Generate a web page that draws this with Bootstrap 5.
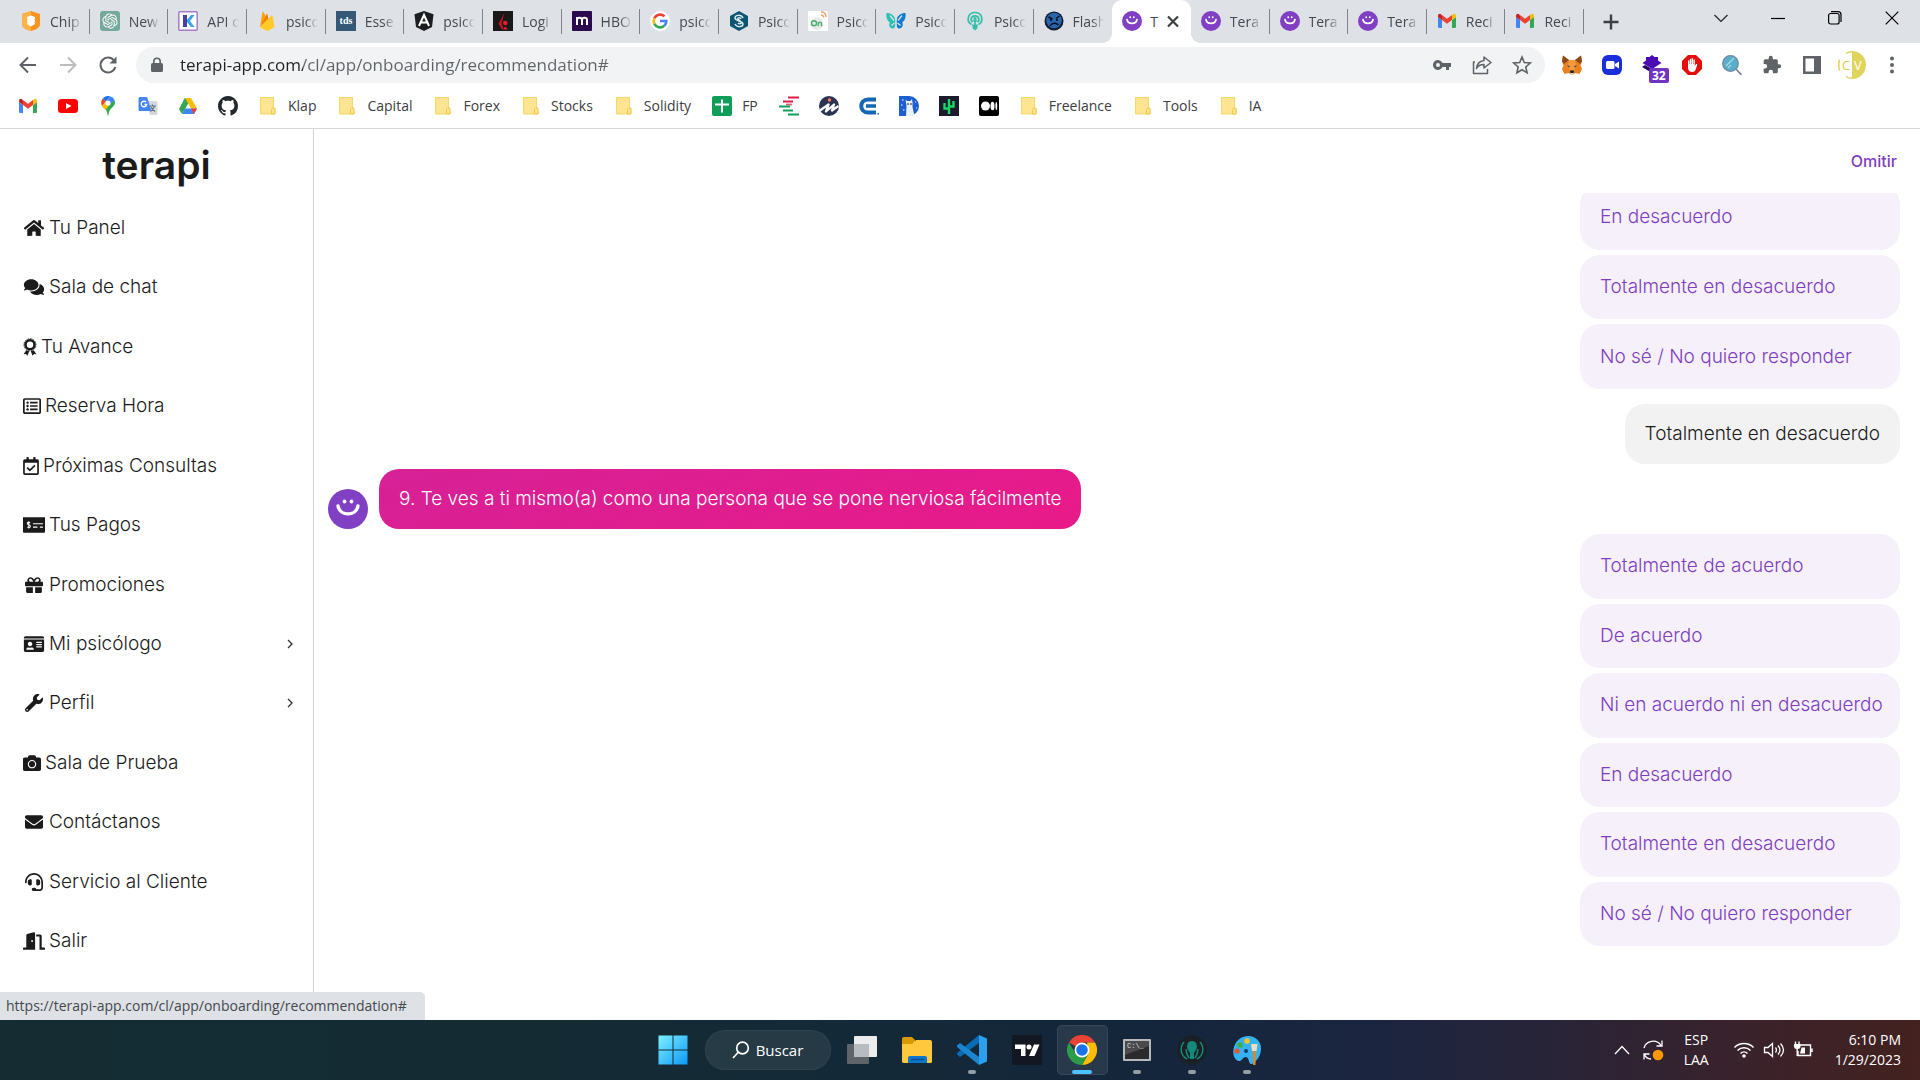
<!DOCTYPE html>
<html lang="es">
<head>
<meta charset="utf-8">
<meta name="viewport" content="width=device-width, initial-scale=1">
<title>Terapi</title>
<link href="https://cdn.jsdelivr.net/npm/bootstrap@5.3.0/dist/css/bootstrap.min.css" rel="stylesheet">
<style>
:root{--ui:"Open Sans","Noto Sans",sans-serif;--brand:Inter,"Open Sans",sans-serif;--violet:#7e3fbf;--strip:#dee1e6}
body{font-family:var(--ui);color:#1b1b1b;overflow:hidden}
svg{display:block;flex:none}
.bare{background:none;border:0;padding:0;color:inherit;display:flex;align-items:center;justify-content:center;text-decoration:none}
.ic20{width:20px;height:20px}
.ic30{width:30px;height:30px}
/* tab strip */
.strip{background:var(--strip);height:43px;padding-left:11px}
.tabs{min-width:0}
.tab-item{flex:1 1 0;min-width:0;height:43px;gap:9px;padding:0 8px 1px 10px;position:relative;font-size:14px;color:#45494d;display:flex;align-items:center;text-decoration:none}
.tab-item::after{content:"";position:absolute;right:0;top:9px;height:25px;width:1px;background:#808488}
.tab-item.on{background:#fff;border-radius:10px 10px 0 0;gap:4px}
.tab-item.on::after,.tab-item.quiet::after{display:none}
.tab-label{flex:1 1 0;min-width:0;overflow:hidden;white-space:nowrap;-webkit-mask-image:linear-gradient(90deg,#000 60%,transparent);mask-image:linear-gradient(90deg,#000 60%,transparent)}
.on .tab-label{-webkit-mask-image:none;mask-image:none}
.flare{position:absolute;bottom:0;width:10px;height:10px}
.flare-l{left:-10px;background:radial-gradient(circle at 0 0,transparent 10px,#fff 10px)}
.flare-r{right:-10px;background:radial-gradient(circle at 100% 0,transparent 10px,#fff 10px)}
.strip-end{width:336px}
.win-btn{width:57px;height:36px}
/* toolbar */
.toolbar{height:44px;padding:0 8px}
.tool{width:40px;height:40px;color:#5f6368}
.omni{background:#f1f3f4;border-radius:18px;height:36px;padding:0 3px 0 14px;margin:0 7px 0 8px}
.url{border:0;outline:0;padding:0;font-size:17px;color:transparent;background:linear-gradient(90deg,#202124 123px,#5f6368 123px);-webkit-background-clip:text;background-clip:text}
.ext-badge{position:absolute;left:17px;top:23px;background:#6f35c0;color:#fff;font-size:12px;line-height:15px;font-weight:700;border-radius:2px;padding:0 3px}
/* bookmarks */
.marks{height:42px;padding:0 8px 4px;border-bottom:1px solid #d5d7da;font-size:14px}
.mark-link{display:flex;align-items:center;gap:10px;padding:0 10px;color:#3c4043;text-decoration:none}
.mark-text{padding-right:11px}
/* page */
.side{width:314px;border-right:1px solid #d0d0d3;padding-bottom:49px}
.logo{font:600 39px/66px var(--brand);color:#1b1b1b;padding-top:3px}
.side-link{flex:1 1 0;display:flex;align-items:center;gap:4px;padding:0 19px 0 23px;font:300 19px/24px var(--brand);color:#1b1b1b;text-decoration:none}
.side-link svg{fill:currentColor;height:18px}
.w22{width:22px}.w18{width:18px}.w16{width:16px}.w14{width:14px}
.skip{font:500 16px/24px var(--brand);color:var(--violet)}
.page-head{height:65px;padding:0 23px 0 0}
.thread{overflow:hidden;padding:0 20px 74px 14px}
.options{width:320px;gap:5px}
.three{height:204px}.six{height:412px}
.opt{flex:1 1 0;border:0;border-radius:20px;background:#f5f0fa;color:var(--violet);font:300 19px/24px var(--brand);text-align:left;white-space:nowrap;padding:0 20px}
.reply{border-radius:20px;background:#f2f2f2;font:300 19px/24px var(--brand);padding:18px 20px;margin:15px 0 5px}
.question{gap:11px;margin-bottom:5px}
.ask{border-radius:20px;background:linear-gradient(160deg,#d62196,#e91a89);color:#fff;font:300 19px/24px var(--brand);padding:18px 20px}
.status{position:absolute;left:0;bottom:0;background:var(--strip);border-radius:0 5px 0 0;color:#45494d;font-size:14px;line-height:28px;padding:0 18px 0 6px}
/* taskbar */
.taskbar{height:60px;background:linear-gradient(90deg,#142c32 0,#142b35 35%,#14263b 60%,#1c2540 72%,#2a2436 82%,#3a222b 91%,#43221f 100%);color:#fff}
.app{width:55px;height:60px;position:relative}
.app.run::after{content:"";position:absolute;bottom:6px;width:8px;height:4px;border-radius:2px;background:#949ea6}
.app.live::before{content:"";position:absolute;inset:5px 2px;border-radius:5px;background:#ffffff16;border:1px solid #ffffff12}
.app.live::after{width:20px;background:#4cc2ff}
.app svg{position:relative}
.find{width:126px;height:40px;border-radius:20px;background:#ffffff14;border:1px solid #ffffff0d;gap:6px;font-size:15px}
.tray{font-size:14px;line-height:20px}
.clock{margin-right:19px}
</style>
<script src="https://cdn.jsdelivr.net/npm/bootstrap@5.3.0/dist/js/bootstrap.bundle.min.js"></script>
</head>
<body class="vh-100 d-flex flex-column bg-white">
<svg class="d-none" aria-hidden="true">
<symbol id="gmail" viewBox="0 0 20 20"><path fill="#4285f4" d="M1 6v9.500a1.500 1.500 0 0 0 1.500 1.500H5V9z"/><path fill="#34a853" d="M15 9v8h2.500a1.500 1.500 0 0 0 1.500-1.500V6z"/><path fill="#fbbc04" d="M15 4.500V9l4-3V5c0-2-2-2.800-3.300-1.600z"/><path fill="#c5221f" d="M1 5v1l4 3V4.500l-.7-1.100C3 2.200 1 3 1 5z"/><path fill="#ea4335" d="M5 9V4l5 3.800L15 4v5l-5 3.800z"/></symbol>
<symbol id="smile" viewBox="0 0 40 40"><circle cx="20" cy="20" r="20" fill="#8140c4"/><circle cx="16.500" cy="12.500" r="1.900" fill="#fff"/><circle cx="23.500" cy="12.500" r="1.900" fill="#fff"/><path d="M10 17c2 10.500 18 10.500 20 0" fill="none" stroke="#fff" stroke-width="3.400" stroke-linecap="round"/></symbol>
<symbol id="folder" viewBox="0 0 20 20"><path fill="#ffe591" stroke="#f7d766" d="M2.500 1.500h13v10.500h1.500v6H2.500z"/><path fill="#ffe591" stroke="#f0c94b" d="M13.500 18v-4.500c0-1.500 3-2 3.500 0V18z"/></symbol>
<symbol id="chev" viewBox="0 0 8 10"><path d="M2 1l4 4-4 4" fill="none" stroke="#333" stroke-width="1.300"/></symbol>
</svg>

<header>
<div class="strip d-flex">
<nav class="tabs d-flex flex-fill" aria-label="Pestañas">
<a class="tab-item" href="#"><svg class="ic20" viewBox="0 0 20 20"><path fill="#f7931e" d="M10 0l9 3v10c0 4-5 6-9 7-4-1-9-3-9-7V3z"/><path fill="#ffb347" d="M10 0v20c-4-1-9-3-9-7V3z"/><path fill="#fff" d="M6 6l4-1.500L14 6v2l-1 .5 1 .5v2l-1 .5 1 .5v1l-4 2.500L6 13v-1l1-.5-1-.5V9l1-.5L6 8z"/></svg><span class="tab-label">Chip</span></a>
<a class="tab-item" href="#"><svg class="ic20" viewBox="0 0 20 20"><rect width="20" height="20" rx="3" fill="#75a99b"/><path fill="#fff" transform="translate(2.400 2.400) scale(.635)" d="M22.282 9.821a5.985 5.985 0 0 0-.516-4.911 6.046 6.046 0 0 0-6.510-2.900A6.065 6.065 0 0 0 4.981 4.182a5.985 5.985 0 0 0-3.998 2.900 6.046 6.046 0 0 0 .743 7.097 5.980 5.980 0 0 0 .511 4.911 6.051 6.051 0 0 0 6.515 2.900A5.985 5.985 0 0 0 13.260 24a6.056 6.056 0 0 0 5.772-4.206 5.989 5.989 0 0 0 3.998-2.900 6.056 6.056 0 0 0-.748-7.073zm-9.022 12.608a4.476 4.476 0 0 1-2.876-1.041l.142-.080 4.778-2.758a.795.795 0 0 0 .393-.681v-6.737l2.020 1.169a.071.071 0 0 1 .038.052v5.583a4.504 4.504 0 0 1-4.495 4.494zm-9.661-4.125a4.471 4.471 0 0 1-.535-3.014l.142.085 4.783 2.758a.771.771 0 0 0 .781 0l5.843-3.369v2.332a.080.080 0 0 1-.033.062L9.740 19.950a4.499 4.499 0 0 1-6.141-1.646zM2.341 7.896a4.485 4.485 0 0 1 2.366-1.973V11.600a.766.766 0 0 0 .388.677l5.814 3.354-2.020 1.169a.076.076 0 0 1-.071 0l-4.830-2.787A4.504 4.504 0 0 1 2.341 7.872zm16.596 3.856L13.104 8.364 15.119 7.200a.076.076 0 0 1 .071 0l4.830 2.791a4.494 4.494 0 0 1-.677 8.104v-5.677a.790.790 0 0 0-.407-.667zm2.011-3.023l-.142-.085-4.774-2.782a.776.776 0 0 0-.785 0L9.409 9.230V6.897a.066.066 0 0 1 .028-.062l4.830-2.787a4.499 4.499 0 0 1 6.680 4.660zM8.307 12.863l-2.020-1.164a.080.080 0 0 1-.038-.057V6.074a4.499 4.499 0 0 1 7.376-3.454l-.142.081L8.704 5.459a.795.795 0 0 0-.393.681zm1.098-2.365l2.602-1.500 2.607 1.500v2.999l-2.597 1.500-2.607-1.500z"/></svg><span class="tab-label">New</span></a>
<a class="tab-item" href="#"><svg class="ic20" viewBox="0 0 20 20"><rect x=".8" y=".8" width="18.400" height="18.400" rx="1" fill="#fff" stroke="#a77bc9" stroke-width="1.500"/><path fill="#4b3fa7" d="M5 4h4v12H5z"/><path fill="#35a6e0" d="M9 9l4-5h3.500l-4.500 6 4.500 6H13l-4-5z"/></svg><span class="tab-label">API d</span></a>
<a class="tab-item" href="#"><svg class="ic20" viewBox="0 0 20 20"><path fill="#ffa000" d="M3 16L5.500 1c.1-.6.600-.6.900-.1L9 5.500z"/><path fill="#f57c00" d="M11.500 8L3 16 9.500 3.500c.3-.5.700-.5 1 0z"/><path fill="#ffca28" d="M3 16L14.500 4.500c.4-.4.900-.2 1 .3L17.500 16l-6.500 3.700c-.5.300-1 .3-1.500 0z"/></svg><span class="tab-label">psico</span></a>
<a class="tab-item" href="#"><svg class="ic20" viewBox="0 0 20 20"><rect width="20" height="20" fill="#355876"/><text x="10" y="13" fill="#fff" font-family="Liberation Serif" font-weight="700" font-size="10" text-anchor="middle">tds</text></svg><span class="tab-label">Esse</span></a>
<a class="tab-item" href="#"><svg class="ic20" viewBox="0 0 20 20"><path fill="#1b1d20" d="M10 0l9.500 3.200L18 16l-8 4-8-4L.5 3.200z"/><path fill="none" stroke="#fff" stroke-width="2" d="M5 15l5-11 5 11M7 11.500h6"/></svg><span class="tab-label">psico</span></a>
<a class="tab-item" href="#"><svg class="ic20" viewBox="0 0 20 20"><rect width="20" height="20" fill="#191919"/><path fill="#c8141e" d="M11.500 2L5.500 12.500 9 18.500l1.500-1-2-5z"/><circle cx="12.300" cy="12" r="2.300" fill="#e3202b"/><path fill="#e3202b" d="M10 18.500l2-3 3 3z"/></svg><span class="tab-label">Logi</span></a>
<a class="tab-item" href="#"><svg class="ic20" viewBox="0 0 20 20"><rect width="20" height="20" rx="1" fill="#2b0a4d"/><path fill="none" stroke="#fff" stroke-width="2" d="M5 14V6m0 3c0-3 5-3 5 0v5m0-5c0-3 5-3 5 0v5"/></svg><span class="tab-label">HBO</span></a>
<a class="tab-item" href="#"><svg class="ic20" viewBox="0 0 20 20"><circle cx="10" cy="10" r="10" fill="#fff"/><g fill="none" stroke-width="2.600"><path stroke="#ea4335" d="M4.300 7.200A6.400 6.400 0 0 1 14.500 5.400"/><path stroke="#fbbc05" d="M4.300 7.200a6.400 6.400 0 0 0 0 5.600"/><path stroke="#34a853" d="M4.300 12.800a6.400 6.400 0 0 0 10 2"/><path stroke="#4285f4" d="M14.300 14.800c1.500-1.300 2.100-3 2-4.800H10"/></g></svg><span class="tab-label">psico</span></a>
<a class="tab-item" href="#"><svg class="ic20" viewBox="0 0 20 20"><path fill="#0c5672" d="M10 0l9 5v10l-9 5-9-5V5z"/><path fill="none" stroke="#dce9ee" stroke-width="1.500" d="M14 7c-2-4-8-3-8 0s8 3 8 6-6 4-8 0M12 8c-1-2-4-1-3 0l3 3c1 2-2 2-3 1"/></svg><span class="tab-label">Psico</span></a>
<a class="tab-item" href="#"><svg class="ic20" viewBox="0 0 20 20"><rect width="20" height="20" fill="#fff"/><circle cx="9" cy="12.500" r="6.500" fill="#e9e9ea"/><circle cx="6" cy="12.200" r="2.500" fill="none" stroke="#4fae6c" stroke-width="1.500"/><path fill="none" stroke="#4fae6c" stroke-width="1.500" d="M10.300 15.300v-4m0 1.500c0-2 3.200-2 3.200 0v2.500"/><path fill="none" stroke="#f5a572" stroke-width="1.500" d="M13 1c3 0 5 2 5 5M13 4c1.500 0 2.500 1 2.500 2.500"/></svg><span class="tab-label">Psico</span></a>
<a class="tab-item" href="#"><svg class="ic20" viewBox="0 0 20 20"><path fill="#2cc0b4" d="M9.400 8.500C8.500 4.500 5 2 .5 2 0 6 1 10 3.800 11.200c-1.300 2.500-.3 6 2.700 6.300 2.500 0 3.300-2.500 3-6z"/><path fill="#0f7bcf" d="M10.600 8.500c.9-4 4.400-6.500 8.900-6.500.5 4-.5 8-3.300 9.200 1.300 2.500.3 6-2.700 6.300-2.500 0-3.300-2.500-3-6z"/><path stroke="#dee1e6" stroke-width="1.300" fill="none" d="M10 3v16M8.500 12l-3 2.500M11.500 12l3 2.500M4 4.500l4 5M16 4.500l-4 5"/></svg><span class="tab-label">Psico</span></a>
<a class="tab-item" href="#"><svg class="ic20" viewBox="0 0 20 20"><g fill="none" stroke="#35bfa8" stroke-width="1.700"><path d="M6.500 13.500C1 10.500 2.500 1.500 10 1.500s9 9 3.500 12"/><path d="M7.500 11C5 9 6 4.800 10 4.800s5 4.200 2.500 6.200M8.500 9l1.500 2 1.500-2M10 10v5"/></g><circle cx="10" cy="7.500" r="1.600" fill="#35bfa8"/><path fill="#35bfa8" d="M7 13.500h6l-.8 4L10 19.500l-2.200-2z"/></svg><span class="tab-label">Psico</span></a>
<a class="tab-item quiet" href="#"><svg class="ic20" viewBox="0 0 20 20"><circle cx="10" cy="10" r="9.500" fill="#111c33"/><circle cx="10" cy="9.500" r="7.800" fill="#2a66ad"/><path fill="none" stroke="#0b1020" stroke-width="1.500" d="M4.500 6l4 2M15.500 5l-3.500 2.500M6 15c2-3.500 6-3.500 8.500-1"/><circle cx="7" cy="9" r="1"/><circle cx="13" cy="9" r="1"/></svg><span class="tab-label">Flash</span></a>
<div class="tab-item on"><span class="flare flare-l"></span><span class="flare flare-r"></span><svg class="ic20 me-1"><use href="#smile"/></svg><span class="tab-label">T</span><button class="bare" aria-label="Cerrar pestaña"><svg width="20" height="20" viewBox="0 0 20 20"><path stroke="#3c4043" stroke-width="2.200" d="M5 5.500l10 10M15 5.500l-10 10"/></svg></button></div>
<a class="tab-item" href="#"><svg class="ic20"><use href="#smile"/></svg><span class="tab-label">Tera</span></a>
<a class="tab-item" href="#"><svg class="ic20"><use href="#smile"/></svg><span class="tab-label">Tera</span></a>
<a class="tab-item" href="#"><svg class="ic20"><use href="#smile"/></svg><span class="tab-label">Tera</span></a>
<a class="tab-item" href="#"><svg class="ic20"><use href="#gmail"/></svg><span class="tab-label">Reci</span></a>
<a class="tab-item" href="#"><svg class="ic20"><use href="#gmail"/></svg><span class="tab-label">Reci</span></a>
</nav>
<div class="strip-end d-flex flex-shrink-0">
<button class="bare px-3 me-auto" aria-label="Nueva pestaña"><svg width="22" height="22" viewBox="0 0 22 22"><path stroke="#3c4043" stroke-width="2.400" d="M11 3.500v15M3.500 11h15"/></svg></button>
<button class="bare win-btn" aria-label="Buscar pestañas"><svg width="16" height="16" viewBox="0 0 16 16"><path fill="none" stroke="#222" stroke-width="1.200" d="M1.500 5L8 11.500 14.500 5"/></svg></button>
<button class="bare win-btn" aria-label="Minimizar"><svg width="14" height="14" viewBox="0 0 14 14"><path stroke="#000" stroke-width="1.200" d="M0 7.500h14"/></svg></button>
<button class="bare win-btn" aria-label="Restaurar"><svg width="14" height="14" viewBox="0 0 14 14"><g fill="none" stroke="#000" stroke-width="1.200"><rect x=".6" y="2.500" width="10.500" height="10.500" rx="2"/><path d="M3 .7h7a3 3 0 0 1 3 3V11"/></g></svg></button>
<button class="bare win-btn" aria-label="Cerrar"><svg width="14" height="14" viewBox="0 0 14 14"><path stroke="#000" stroke-width="1.200" d="M.7.700l12.600 12.600M13.300.700L.7 13.300"/></svg></button>
</div>
</div>

<div class="toolbar d-flex align-items-center">
<button class="bare tool" aria-label="Atrás"><svg class="ic20" viewBox="0 0 20 20"><path fill="none" stroke="#5f6368" stroke-width="2" d="M18 10H3M10 2.500L2.500 10l7.500 7.500"/></svg></button>
<button class="bare tool" aria-label="Adelante"><svg class="ic20" viewBox="0 0 20 20"><path fill="none" stroke="#babcbe" stroke-width="2" d="M2 10h15M10 2.500l7.500 7.500-7.500 7.500"/></svg></button>
<button class="bare tool" aria-label="Recargar"><svg class="ic20" viewBox="0 0 20 20"><path fill="none" stroke="#5f6368" stroke-width="2" d="M16 5.500A7.500 7.500 0 1 0 17.300 12"/><path fill="#5f6368" d="M18.500 1.500v7h-7z"/></svg></button>
<div class="omni d-flex flex-fill align-items-center">
<svg width="14" height="16" viewBox="0 0 14 16" class="me-3"><path fill="#5f6368" d="M3 6V4.500a4 4 0 0 1 8 0V6h.5A1.500 1.500 0 0 1 13 7.500v6a1.500 1.500 0 0 1-1.500 1.500h-9A1.500 1.500 0 0 1 1 13.500v-6A1.500 1.500 0 0 1 2.500 6zm1.600 0h4.800V4.500a2.400 2.400 0 0 0-4.800 0z"/></svg>
<input class="url flex-fill" type="text" aria-label="Dirección" value="terapi-app.com/cl/app/onboarding/recommendation#">
<button class="bare tool" aria-label="Contraseñas"><svg class="ic20" viewBox="0 0 20 20"><path fill="#5f6368" fill-rule="evenodd" d="M10.500 8A5 5 0 1 0 10.500 12H14v3h3v-3h2V8zM6 12a2 2 0 1 1 0-4 2 2 0 0 1 0 4z"/></svg></button>
<button class="bare tool" aria-label="Compartir"><svg class="ic20" viewBox="0 0 20 20"><path fill="none" stroke="#5f6368" stroke-width="1.500" stroke-linejoin="round" d="M3 7H1.500v11.500h14V14M12 2l7 5.500-7 5.500V9.500c-3 0-6 1-7.500 4C5 9 8 6 12 5.500z"/></svg></button>
<button class="bare tool" aria-label="Favorito"><svg class="ic20" viewBox="0 0 20 20"><path fill="none" stroke="#5f6368" stroke-width="1.600" d="M10 2l2.300 5.500 6 .5-4.500 4 1.300 5.800L10 14.700l-5.100 3.100L6.200 12l-4.500-4 6-.5z"/></svg></button>
</div>
<button class="bare tool" aria-label="MetaMask"><svg class="ic20" viewBox="0 0 20 20"><path fill="#e8821e" d="M1 .5L7 5h6l6-4.500 1 6-1.500 4L20 14l-2.500 5-4.500-1-1.500 1.500h-3L7 18l-4.500 1L0 14l1.500-3.500-1.500-4z"/><path fill="#8a4a1c" d="M1 .5L7 5 2 9 0 6.500zM19 .5L13 5l5 4 2-2.500z"/><path fill="#f6993f" d="M7 5h6l1 6-2 5H8l-2-5z"/><path fill="#3b3a45" d="M5 10l3 1.200-1 1.300zM15 10l-3 1.200 1 1.300z"/><path fill="#1d1d25" d="M8 15.500h4l-.5 2.500h-3z"/><path fill="#d9cfc6" d="M8 18h4l-.5 1.500h-3z"/></svg></button>
<button class="bare tool" aria-label="Zoom"><svg class="ic20" viewBox="0 0 20 20"><rect width="20" height="20" rx="6" fill="#1a2fd8"/><rect x="4" y="6" width="8.500" height="8" rx="1.500" fill="#fff"/><path fill="#fff" d="M13 9l4-2.500v7L13 11z"/></svg></button>
<button class="bare tool position-relative" aria-label="Extensión"><svg class="ic20" viewBox="0 0 20 20"><path fill="#2a0560" d="M0 12l3-2 7 4v4z"/><path fill="#4a0bb0" d="M10 0l2.500 2H16v3.500l3.500 2.500L10 14 .5 8 4 5.500V2h3.500z"/></svg><span class="ext-badge">32</span></button>
<button class="bare tool" aria-label="Bloqueador"><svg class="ic20" viewBox="0 0 20 20"><path fill="#e50c0c" d="M6 0h8l6 6v8l-6 6H6l-6-6V6z"/><path fill="#fff" d="M6 6c0-1 1.400-1 1.400 0V9h.4V4.500c0-1 1.400-1 1.400 0V9h.4V3.800c0-1 1.400-1 1.400 0V9h.4V5c0-1 1.400-1 1.400 0v6l1-1.500c.5-.8 1.700-.3 1.400.6L13.500 15c-.6 1.200-1.500 2-3 2-3 0-4.500-1.500-4.500-4.500z"/></svg></button>
<button class="bare tool" aria-label="Lupa"><svg class="ic20" viewBox="0 0 20 20"><path stroke="#777fa0" stroke-width="1.600" d="M14 14l5.500 6"/><circle cx="8.500" cy="8.500" r="7.800" fill="#58adc8" stroke="#6f89a8" stroke-width="1.200"/><path stroke="#a5d5e2" stroke-width="1.500" d="M4 11l8-8M6 13l3-3"/></svg></button>
<button class="bare tool" aria-label="Extensiones"><svg class="ic20" viewBox="0 0 24 24"><path fill="#5f6368" d="M20.500 11H19V7a2 2 0 0 0-2-2h-4V3.500a2.500 2.500 0 0 0-5 0V5H4a2 2 0 0 0-2 2v3.800h1.500a2.700 2.700 0 0 1 0 5.400H2V20a2 2 0 0 0 2 2h3.800v-1.500a2.700 2.700 0 0 1 5.400 0V22H17a2 2 0 0 0 2-2v-4h1.500a2.500 2.500 0 0 0 0-5z"/></svg></button>
<button class="bare tool" aria-label="Panel lateral"><svg class="ic20" viewBox="0 0 20 20"><path fill="#5f6368" fill-rule="evenodd" d="M1 1h18v18H1zm2.500 2.500v13H12v-13z"/></svg></button>
<button class="bare tool" aria-label="Perfil"><svg width="28" height="28" viewBox="0 0 28 28"><circle cx="14" cy="14" r="14" fill="#fff"/><path fill="#e0d55c" d="M14 0a14 14 0 0 1 0 28z"/><path fill="none" stroke="#e0d55c" stroke-width="1.500" d="M14 .8q-4 0-6 1.700M14 27.200q-4 0-6-1.700M1.500 8.500q-1.500 5.500 0 11"/><text x="4" y="19" font-family="Open Sans" font-size="13" fill="#d9cd4d">C</text><text x="16" y="19" font-family="Open Sans" font-size="13" fill="#fff">V</text></svg></button>
<button class="bare tool" aria-label="Menú"><svg class="ic20" viewBox="0 0 20 20" fill="#5f6368"><circle cx="10" cy="3.500" r="2"/><circle cx="10" cy="10" r="2"/><circle cx="10" cy="16.500" r="2"/></svg></button>
</div>

<nav class="marks d-flex align-items-center" aria-label="Marcadores">
<a class="mark-link" href="#" aria-label="Gmail"><svg class="ic20"><use href="#gmail"/></svg></a>
<a class="mark-link" href="#" aria-label="YouTube"><svg class="ic20" viewBox="0 0 20 20"><rect y="3" width="20" height="14" rx="3.500" fill="#f00"/><path fill="#fff" d="M8 7l5.500 3L8 13z"/></svg></a>
<a class="mark-link" href="#" aria-label="Maps"><svg class="ic20" viewBox="0 0 20 20"><path fill="#34a853" d="M4 10l4 4c1.500 2 1.500 6 2 6s.5-4 2-6c2-3 5-4 5-7.500 0-1-.2-1.800-.5-2.500z"/><path fill="#1a73e8" d="M12 .3A7 7 0 0 0 4.700 2.600L8 5.500z"/><path fill="#ea4335" d="M4.700 2.600A7 7 0 0 0 4 10l4-4.500z"/><path fill="#4285f4" d="M12 .3L8 5.500l4 3 4.500-4.500A7 7 0 0 0 12 .3z"/><path fill="#fbbc04" d="M4 10l4-4.500 4 3L7.500 14C6.500 12.500 5 11.500 4 10z"/><circle cx="10" cy="7" r="2.600" fill="#fff"/></svg></a>
<a class="mark-link" href="#" aria-label="Traductor"><svg class="ic20" viewBox="0 0 20 20"><path fill="#d5d8dc" d="M8 5h10a1.500 1.500 0 0 1 1.500 1.500v11A1.500 1.500 0 0 1 18 19h-6z"/><path fill="none" stroke="#65727a" stroke-width="1.200" d="M11 10h7M14.500 8.500V10M16.500 10c-.5 3-2.500 4.500-4 5.500M13 11.500l4 4"/><path fill="#4285f4" d="M2 1h7l4.500 14H2A1.500 1.500 0 0 1 .5 13.500v-11A1.500 1.500 0 0 1 2 1z"/><path fill="none" stroke="#fff" stroke-width="1.400" d="M8 6a2.800 2.800 0 1 0 .8 2.500H6.500"/></svg></a>
<a class="mark-link" href="#" aria-label="Drive"><svg class="ic20" viewBox="0 0 20 20"><path fill="#34a853" d="M6.800 2h3.200L10 8 4 18l-3-5z"/><path fill="#fbbc04" d="M7 2h6l6 10.500h-6z"/><path fill="#4285f4" d="M6.800 12.500H19L16 18H4z"/><path fill="#ea4335" d="M13 12.500h6L16 18z"/></svg></a>
<a class="mark-link" href="#" aria-label="GitHub"><svg class="ic20" viewBox="0 0 16 16"><path fill="#24292e" d="M8 0C3.580 0 0 3.580 0 8c0 3.540 2.290 6.530 5.470 7.590.4.070.55-.17.55-.38 0-.19-.01-.82-.01-1.490-2.010.37-2.530-.49-2.690-.94-.09-.23-.48-.94-.82-1.130-.28-.15-.68-.52-.01-.53.63-.01 1.080.58 1.230.82.72 1.210 1.870.87 2.330.66.07-.52.28-.87.51-1.070-1.780-.2-3.640-.89-3.640-3.950 0-.87.31-1.590.82-2.150-.08-.2-.36-1.020.08-2.120 0 0 .67-.21 2.200.82.64-.18 1.320-.27 2-.27s1.360.09 2 .27c1.530-1.040 2.200-.82 2.200-.82.44 1.100.16 1.920.08 2.120.51.56.82 1.270.82 2.150 0 3.070-1.870 3.750-3.650 3.950.29.25.54.73.54 1.480 0 1.070-.01 1.930-.01 2.200 0 .21.15.46.55.38A8 8 0 0 0 16 8c0-4.420-3.580-8-8-8z"/></svg></a>
<a class="mark-link mark-text" href="#"><svg class="ic20"><use href="#folder"/></svg>Klap</a>
<a class="mark-link mark-text" href="#"><svg class="ic20"><use href="#folder"/></svg>Capital</a>
<a class="mark-link mark-text" href="#"><svg class="ic20"><use href="#folder"/></svg>Forex</a>
<a class="mark-link mark-text" href="#"><svg class="ic20"><use href="#folder"/></svg>Stocks</a>
<a class="mark-link mark-text" href="#"><svg class="ic20"><use href="#folder"/></svg>Solidity</a>
<a class="mark-link mark-text" href="#"><svg class="ic20" viewBox="0 0 20 20"><rect width="20" height="20" rx="2" fill="#0f9d58"/><path stroke="#fff" stroke-width="2" d="M10 3.500v13M3 8.500h14"/></svg>FP</a>
<a class="mark-link" href="#" aria-label="Listas"><svg class="ic20" viewBox="0 0 20 20"><path stroke="#df1d45" stroke-width="1.800" d="M9 1.500h11M4 5.500h10"/><path stroke="#e35d75" stroke-width="1.800" d="M7 8.500h6"/><path stroke="#12a05c" stroke-width="1.800" d="M0 10.500h11M4 14.500h10M9 18.500h11"/></svg></a>
<a class="mark-link" href="#" aria-label="Red"><svg class="ic20" viewBox="0 0 20 20"><circle cx="10" cy="10" r="10" fill="#2b3553"/><path fill="none" stroke="#fff" stroke-width="2.300" stroke-linejoin="round" d="M1 14.500L9.500 8.500 7 15.500 15 8.500 13 14.500 19.500 10"/><circle cx="10.500" cy="4" r="1.700" fill="#ff7c5c"/></svg></a>
<a class="mark-link" href="#" aria-label="Correo"><svg class="ic20" viewBox="0 0 20 20"><path fill="none" stroke="#1467b3" stroke-width="4" d="M17 3.500H9C0 3.500 0 16.500 9 16.500h8"/><path stroke="#1467b3" stroke-width="3.500" d="M7 10h10"/><path fill="#1467b3" d="M18.500 17h1.500v1.500h-1.500z"/></svg></a>
<a class="mark-link" href="#" aria-label="Llama"><svg class="ic20" viewBox="0 0 20 20"><path fill="#1e5fd0" d="M0 0h10a10 10 0 0 1 0 20H0z"/><path fill="#e8f2fb" d="M6.500 3.500L8 5h3.500L13 3l.5 3.500V11l2 9H7l.5-10z"/><circle cx="9" cy="8" r=".8"/><circle cx="12" cy="8" r=".8"/><path stroke="#9fd0ff" stroke-width="1.500" d="M3 4h1.500M2 9h1.500M4 14h1.500M16 6h1M17 12h1"/></svg></a>
<a class="mark-link" href="#" aria-label="Cactus"><svg class="ic20" viewBox="0 0 20 20"><rect width="20" height="20" fill="#1b1b2b"/><path fill="none" stroke="#14d968" stroke-width="2.400" d="M10 18V3M5.500 7v5.500H10M14.500 5v5.500H10"/></svg></a>
<a class="mark-link" href="#" aria-label="Medium"><svg class="ic20" viewBox="0 0 20 20"><rect width="20" height="20" rx="2" fill="#000"/><circle cx="6.500" cy="10" r="4.500" fill="#fff"/><ellipse cx="13.500" cy="10" rx="2" ry="4.300" fill="#fff"/><ellipse cx="17.300" cy="10" rx=".9" ry="4" fill="#fff"/></svg></a>
<a class="mark-link mark-text" href="#"><svg class="ic20"><use href="#folder"/></svg>Freelance</a>
<a class="mark-link mark-text" href="#"><svg class="ic20"><use href="#folder"/></svg>Tools</a>
<a class="mark-link mark-text" href="#"><svg class="ic20"><use href="#folder"/></svg>IA</a>
</nav>
</header>

<main class="d-flex flex-fill position-relative overflow-hidden">
<aside class="side d-flex flex-column flex-shrink-0">
<div class="logo text-center">terapi</div>
<nav class="d-flex flex-column flex-fill" aria-label="Principal">
<a class="side-link" href="#"><svg class="w22" viewBox="0 0 576 512"><path d="M280.370 148.260L96 300.110V464a16 16 0 0 0 16 16l112.060-.29a16 16 0 0 0 15.920-16V368a16 16 0 0 1 16-16h64a16 16 0 0 1 16 16v95.640a16 16 0 0 0 16 16.050L464 480a16 16 0 0 0 16-16V300L295.670 148.260a12.190 12.190 0 0 0-15.300 0zM571.600 251.470L488 182.560V44.050a12 12 0 0 0-12-12h-56a12 12 0 0 0-12 12v72.610L318.470 43a48 48 0 0 0-61 0L4.340 251.470a12 12 0 0 0-1.600 16.900l25.500 31A12 12 0 0 0 45.150 301l235.220-193.740a12.190 12.190 0 0 1 15.300 0L530.900 301a12 12 0 0 0 16.900-1.600l25.500-31a12 12 0 0 0-1.700-16.930z"/></svg>Tu Panel</a>
<a class="side-link" href="#"><svg class="w22" viewBox="0 0 576 512"><path d="M416 192c0-88.400-93.100-160-208-160S0 103.600 0 192c0 34.300 14.100 65.900 38 92-13.400 30.200-35.500 54.200-35.800 54.500-2.200 2.300-2.800 5.700-1.500 8.700S4.800 352 8 352c36.600 0 66.900-12.300 88.700-25 32.200 15.700 70.300 25 111.300 25 114.900 0 208-71.600 208-160zm122 220c23.900-26 38-57.700 38-92 0-66.900-53.500-124.200-129.300-148.100.9 6.600 1.300 13.300 1.300 20.100 0 105.900-107.700 192-240 192-10.800 0-21.300-.8-31.700-1.900C207.800 439.600 281.800 480 368 480c41 0 79.100-9.200 111.300-25 21.800 12.700 52.100 25 88.700 25 3.200 0 6.100-1.900 7.300-4.800 1.300-2.900.7-6.300-1.500-8.700-.3-.3-22.400-24.200-35.800-54.500z"/></svg>Sala de chat</a>
<a class="side-link" href="#"><svg class="w14" viewBox="0 0 384 512"><circle cx="192" cy="192" r="128" fill="none" stroke="currentColor" stroke-width="72"/><path fill="none" stroke="currentColor" stroke-width="24" stroke-dasharray="50 26" d="M192 20a172 172 0 1 1-1 0z"/><path d="M85 345l85 34-50 125-42-48-68 8zM299 345l-85 34 50 125 42-48 68 8z"/></svg>Tu Avance</a>
<a class="side-link" href="#"><svg class="w18" viewBox="0 0 512 512"><path fill-rule="evenodd" d="M48 32h416a48 48 0 0 1 48 48v352a48 48 0 0 1-48 48H48a48 48 0 0 1-48-48V80a48 48 0 0 1 48-48zm0 48v352h416V80z"/><circle cx="130" cy="160" r="34"/><circle cx="130" cy="256" r="34"/><circle cx="130" cy="352" r="34"/><path d="M200 138h216v44H200zM200 234h216v44H200zM200 330h216v44H200z"/></svg>Reserva Hora</a>
<a class="side-link" href="#"><svg class="w16" viewBox="0 0 448 512"><path fill-rule="evenodd" d="M400 64h-48V12q0-12-12-12h-40q-12 0-12 12v52H160V12q0-12-12-12h-40q-12 0-12 12v52H48a48 48 0 0 0-48 48v352a48 48 0 0 0 48 48h352a48 48 0 0 0 48-48V112a48 48 0 0 0-48-48zm0 400H48V160h352z"/><path fill="none" stroke="currentColor" stroke-width="50" d="M115 300l77 80 144-144"/></svg>Próximas Consultas</a>
<a class="side-link" href="#"><svg class="w22" viewBox="0 0 640 512"><path d="M0 32h640v420a28 28 0 0 1-28 28H28a28 28 0 0 1-28-28z"/><g fill="none" stroke="#fff" stroke-width="30"><path d="M208 190c-30-25-84-22-84 16 0 60 90 32 90 88 0 40-60 42-90 14M168 150v210"/><path stroke-width="34" d="M290 220h290M290 318h130M490 318h90"/></g></svg>Tus Pagos</a>
<a class="side-link" href="#"><svg class="w22" viewBox="0 0 512 512"><path d="M32 448c0 17.700 14.300 32 32 32h160V320H32v128zm256 32h160c17.700 0 32-14.300 32-32V320H288v160zm192-320h-42.100c6.200-12.100 10.100-25.500 10.100-40 0-48.500-39.500-88-88-88-41.600 0-68.500 21.300-103 68.300-34.500-47-61.400-68.300-103-68.300-48.500 0-88 39.500-88 88 0 14.500 3.800 27.900 10.100 40H32c-17.700 0-32 14.300-32 32v80c0 8.800 7.200 16 16 16h480c8.800 0 16-7.200 16-16v-80c0-17.700-14.300-32-32-32zm-326.100 0c-22.100 0-40-17.900-40-40s17.900-40 40-40c19.900 0 34.600 3.300 86.100 80h-86.100zm206.100 0h-86.100c51.400-76.500 65.700-80 86.100-80 22.100 0 40 17.900 40 40s-17.900 40-40 40z"/></svg>Promociones</a>
<a class="side-link" href="#"><svg class="w22" viewBox="0 0 576 512"><path d="M528 32H48C21.500 32 0 53.500 0 80v16h576V80c0-26.500-21.500-48-48-48zM0 432c0 26.500 21.500 48 48 48h480c26.500 0 48-21.500 48-48V128H0v304zm352-232c0-4.400 3.600-8 8-8h144c4.400 0 8 3.600 8 8v16c0 4.400-3.600 8-8 8H360c-4.400 0-8-3.600-8-8v-16zm0 64c0-4.400 3.600-8 8-8h144c4.400 0 8 3.600 8 8v16c0 4.400-3.600 8-8 8H360c-4.400 0-8-3.600-8-8v-16zm0 64c0-4.400 3.600-8 8-8h144c4.400 0 8 3.600 8 8v16c0 4.400-3.600 8-8 8H360c-4.400 0-8-3.600-8-8v-16zM176 192c35.300 0 64 28.700 64 64s-28.700 64-64 64-64-28.700-64-64 28.700-64 64-64zM67.100 396.200C75.500 370.500 99.600 352 128 352h8.200c12.300 5.100 25.700 8 39.800 8s27.600-2.900 39.800-8h8.200c28.400 0 52.500 18.500 60.900 44.200 3.200 9.900-5.200 19.800-15.600 19.800H82.700c-10.400 0-18.800-10-15.600-19.800z"/></svg><span class="flex-fill">Mi psicólogo</span><svg width="8" height="10"><use href="#chev"/></svg></a>
<a class="side-link" href="#"><svg class="w22" viewBox="0 0 512 512"><path d="M507.730 109.100c-2.240-9.030-13.540-12.090-20.120-5.510l-74.360 74.360-67.880-11.310-11.310-67.880 74.360-74.360c6.620-6.620 3.430-17.900-5.660-20.160-47.380-11.740-99.550.91-136.580 37.930-39.640 39.640-50.550 97.100-34.050 147.200L18.740 402.760c-24.990 24.990-24.990 65.510 0 90.500 24.990 24.990 65.510 24.990 90.500 0l213.210-213.210c50.120 16.710 107.470 5.680 147.370-34.220 37.070-37.070 49.700-89.320 37.910-136.730zM64 472c-13.250 0-24-10.750-24-24 0-13.260 10.750-24 24-24s24 10.740 24 24c0 13.250-10.750 24-24 24z"/></svg><span class="flex-fill">Perfil</span><svg width="8" height="10"><use href="#chev"/></svg></a>
<a class="side-link" href="#"><svg class="w18" viewBox="0 0 512 512"><path d="M512 144v288c0 26.500-21.500 48-48 48H48c-26.500 0-48-21.500-48-48V144c0-26.500 21.500-48 48-48h88l12.300-32.900c7-18.700 24.900-31.100 44.900-31.100h125.500c20 0 37.900 12.400 44.900 31.100L376 96h88c26.500 0 48 21.500 48 48zM376 288c0-66.200-53.800-120-120-120s-120 53.800-120 120 53.800 120 120 120 120-53.800 120-120zm-32 0c0 48.500-39.500 88-88 88s-88-39.500-88-88 39.500-88 88-88 88 39.500 88 88z"/></svg>Sala de Prueba</a>
<a class="side-link" href="#"><svg class="w22" viewBox="0 0 512 512"><path d="M502.300 190.800c3.900-3.100 9.700-.2 9.700 4.700V400c0 26.500-21.500 48-48 48H48c-26.500 0-48-21.500-48-48V195.600c0-5 5.700-7.800 9.700-4.700 22.400 17.400 52.100 39.500 154.100 113.600 21.100 15.400 56.700 47.800 92.200 47.600 35.700.3 72-32.800 92.300-47.600 102-74.100 131.600-96.300 154-113.700zM256 320c23.200.4 56.600-29.200 73.400-41.400 132.700-96.300 142.800-104.700 173.400-128.700 5.800-4.500 9.200-11.500 9.200-18.900v-19c0-26.500-21.500-48-48-48H48c-26.500 0-48 21.500-48 48v19c0 7.400 3.400 14.300 9.200 18.900 30.600 23.900 40.700 32.400 173.400 128.700 16.800 12.200 50.200 41.800 73.400 41.400z"/></svg>Contáctanos</a>
<a class="side-link" href="#"><svg class="w22" viewBox="0 0 512 512"><path d="M192 208c0-17.670-14.330-32-32-32h-16c-35.350 0-64 28.650-64 64v48c0 35.350 28.650 64 64 64h16c17.670 0 32-14.330 32-32V208zm176 144c35.350 0 64-28.650 64-64v-48c0-35.350-28.650-64-64-64h-16c-17.670 0-32 14.330-32 32v112c0 17.670 14.330 32 32 32h16zM256 0C113.180 0 4.580 118.830 0 256v16c0 8.840 7.160 16 16 16h16c8.840 0 16-7.160 16-16v-16c0-114.690 93.310-208 208-208s208 93.310 208 208v165.720c0 23.350-18.930 42.280-42.280 42.280H320c0-26.510-21.490-48-48-48h-32c-26.510 0-48 21.490-48 48s21.490 48 48 48h181.720c49.860 0 90.280-40.420 90.280-90.280V256C507.420 118.830 398.820 0 256 0z"/></svg>Servicio al Cliente</a>
<a class="side-link" href="#"><svg class="w22" viewBox="0 0 640 512"><path d="M624 448h-80V113.450C544 86.190 522.470 64 496 64H384v64h96v384h144c8.840 0 16-7.160 16-16v-32c0-8.840-7.160-16-16-16zM312.240 1.010l-192 49.740C105.990 54.440 96 67.700 96 82.920V448H16c-8.840 0-16 7.160-16 16v32c0 8.840 7.160 16 16 16h336V33.180c0-21.580-19.560-37.410-39.760-32.170zM264 288c-13.250 0-24-14.330-24-32s10.750-32 24-32 24 14.330 24 32-10.750 32-24 32z"/></svg>Salir</a>
</nav>
</aside>
<section class="d-flex flex-column flex-fill">
<div class="page-head d-flex align-items-center justify-content-end"><a class="skip text-decoration-none" href="#">Omitir</a></div>
<div class="thread d-flex flex-column flex-fill justify-content-end align-items-end">
<div class="options three d-flex flex-column flex-shrink-0">
<button class="opt">En desacuerdo</button>
<button class="opt">Totalmente en desacuerdo</button>
<button class="opt">No sé / No quiero responder</button>
</div>
<div class="reply">Totalmente en desacuerdo</div>
<div class="question d-flex align-items-end align-self-start"><svg width="40" height="40"><use href="#smile"/></svg><div class="ask">9. Te ves a ti mismo(a) como una persona que se pone nerviosa fácilmente</div></div>
<div class="options six d-flex flex-column flex-shrink-0">
<button class="opt">Totalmente de acuerdo</button>
<button class="opt">De acuerdo</button>
<button class="opt">Ni en acuerdo ni en desacuerdo</button>
<button class="opt">En desacuerdo</button>
<button class="opt">Totalmente en desacuerdo</button>
<button class="opt">No sé / No quiero responder</button>
</div>
</div>
</section>
<div class="status">https://terapi-app.com/cl/app/onboarding/recommendation#</div>
</main>

<footer class="taskbar d-flex align-items-center flex-shrink-0">
<div class="col"></div>
<div class="d-flex align-items-center">
<button class="bare app" aria-label="Inicio"><svg class="ic30" viewBox="0 0 30 30"><defs><linearGradient id="wg" x2="1" y2="1"><stop stop-color="#7df0ff"/><stop offset="1" stop-color="#0c98f8"/></linearGradient></defs><path fill="url(#wg)" d="M.5.500h14v14H.5zM15.500.500h14v14h-14zM.5 15.500h14v14H.5zM15.500 15.500h14v14h-14z"/></svg></button>
<button class="bare find mx-1"><svg width="18" height="18" viewBox="0 0 18 18"><g fill="none" stroke="#fff" stroke-width="1.700"><circle cx="10.500" cy="7" r="5.800"/><path d="M6.500 11L1 17"/></g></svg>Buscar</button>
<button class="bare app" aria-label="Vista de tareas"><svg class="ic30" viewBox="0 0 30 30"><rect x="7" y="1" width="23" height="21" rx="1" fill="#ececec"/><rect y="9" width="22" height="20" rx="1" fill="#5e6468"/><path fill="#b9bcbe" d="M7 9h15v13H7z"/></svg></button>
<button class="bare app" aria-label="Explorador"><svg class="ic30" viewBox="0 0 30 30"><path fill="#d99a00" d="M0 4q0-2 2-2h8l3 3v6H0z"/><path fill="#ffc83d" d="M0 9h10l4-4h14q2 0 2 2v20q0 1-2 1H2q-2 0-2-1z"/><path fill="#0f76cc" d="M6 28v-5q0-2 2-2h15q2 0 2 2v5z"/><path stroke="#0a4f8f" stroke-width="1.500" d="M9 24.500h13"/></svg></button>
<button class="bare app run" aria-label="Visual Studio Code"><svg class="ic30" viewBox="0 0 30 30"><path fill="#0a6cb5" d="M22 0v8L3 22l-3-2.500v-1.500z"/><path fill="#1a86d0" d="M22 30v-8L3 8l-3 2.500V12z"/><path fill="#2ba0ee" d="M22 0l8 3.500v23L22 30z"/></svg></button>
<button class="bare app" aria-label="TradingView"><svg class="ic30" viewBox="0 0 30 30"><rect width="30" height="30" fill="#131722"/><path fill="#fff" d="M3 9.500h10.500v11.500H9v-7H3zM22 9.500h5.500L22.500 21h-5.500z"/><circle cx="17" cy="12" r="2.500" fill="#fff"/></svg></button>
<button class="bare app run live" aria-label="Chrome"><svg class="ic30" viewBox="0 0 30 30"><path fill="#ea4335" d="M2 7.500a15 15 0 0 1 26 0H15v7.500z"/><path fill="#fbbc04" d="M28 7.500A15 15 0 0 1 15 30l6.500-11.500L20 7.500z"/><path fill="#2a9c4a" d="M15 30A15 15 0 0 1 2 7.500l6.500 11.300L21 19z"/><circle cx="15" cy="15" r="7.500" fill="#fff"/><circle cx="15" cy="15" r="5.800" fill="#1a73e8"/></svg></button>
<button class="bare app run" aria-label="Terminal"><svg class="ic30" viewBox="0 0 30 30"><rect x="1" y="4" width="28" height="22" rx="1" fill="#b6b8ba"/><rect x="3" y="6" width="24" height="18" fill="#2b2b2d"/><path fill="#4b4b4e" d="M3 6h24v5L3 20z"/><text x="5" y="13" font-family="Liberation Mono" font-size="7" fill="#ddd">C:\_</text></svg></button>
<button class="bare app run" aria-label="GitKraken"><svg class="ic30" viewBox="0 0 30 30"><circle cx="15" cy="15" r="14.500" fill="#1a2024"/><path fill="#12897b" d="M15 6c5 0 6 6 4 9l-2 3v6h-4v-6l-2-3c-2-3-1-9 4-9z"/><path fill="none" stroke="#12897b" stroke-width="1.500" d="M7 7c-5 6-3 14 3 17M23 7c5 6 3 14-3 17M9 14c0 4 1 6 3 9M21 14c0 4-1 6-3 9"/></svg></button>
<button class="bare app run" aria-label="Paint"><svg class="ic30" viewBox="0 0 30 30"><path fill="#35b3f0" d="M16 1c8 0 13 6 13 12 0 8-4 13-9 16-4 1-2-6-6-7-3-1-4 5-8 4C-3 22 1 1 16 1z"/><circle cx="15" cy="6" r="2.800" fill="#f7c325"/><circle cx="8" cy="10" r="2.800" fill="#3fae49"/><circle cx="5" cy="16" r="2.600" fill="#e8542f"/><circle cx="14" cy="16" r="2" fill="#0f3f66"/><path fill="#d08a3a" d="M20.500 15h3.500l-.5 15h-2.500z"/><path fill="#f2dcc0" d="M19 9h6.500l-1 7H20z"/></svg></button>
</div>
<div class="tray col d-flex align-items-center justify-content-end">
<button class="bare" aria-label="Iconos ocultos"><svg width="16" height="10" viewBox="0 0 16 10"><path fill="none" stroke="#fff" stroke-width="1.300" d="M1 9l7-7.500L15 9"/></svg></button>
<button class="bare ms-2 ps-1" aria-label="Sincronizar"><svg width="22" height="22" viewBox="0 0 22 22"><g fill="none" stroke="#fff" stroke-width="1.300"><path d="M2 9C4 1 15 0 19 6.500M20 1.500v5.500h-5.500M9 20C6 20 3.500 18 2.500 15.500M2 20.500V15h5.500"/></g><circle cx="16" cy="16" r="5.300" fill="#ff9800"/></svg></button>
<div class="text-center ms-3 px-1">ESP<br>LAA</div>
<div class="d-flex align-items-center gap-2 ms-3 ps-1"><svg width="22" height="20" viewBox="0 0 22 20"><g fill="none" stroke="#fff" stroke-width="1.500"><path d="M1.500 7.500a13.500 13.500 0 0 1 19 0M4.500 10.500a9.200 9.200 0 0 1 13 0M7.500 13.500a5 5 0 0 1 7 0"/></g><circle cx="11" cy="16" r="1.800" fill="#fff"/></svg>
<svg width="22" height="20" viewBox="0 0 22 20"><g fill="none" stroke="#fff" stroke-width="1.300"><path d="M1.500 7.500h3.500l4.500-4v13L5 12.500H1.500zM12.500 7.500q2 2.500 0 5M15 5.500q4 4.500 0 9M17.500 3.500q6 6.500 0 13"/></g></svg>
<svg width="22" height="20" viewBox="0 0 22 20"><g fill="none" stroke="#fff" stroke-width="1.400"><path d="M7 5h10.500v10.500H5V11M19 8.500v3.500"/><path d="M2.500 1.500v3M6 1.500v3M4.200 8v8"/></g><path fill="#fff" d="M1 4h6.500v2.500q0 2.500-3.200 2.500T1 6.500zM8.500 7.500h3.500v6H7z"/></svg></div>
<div class="clock text-end ms-3 ps-1">6:10 PM<br>1/29/2023</div>
</div>
</footer>
</body>
</html>
